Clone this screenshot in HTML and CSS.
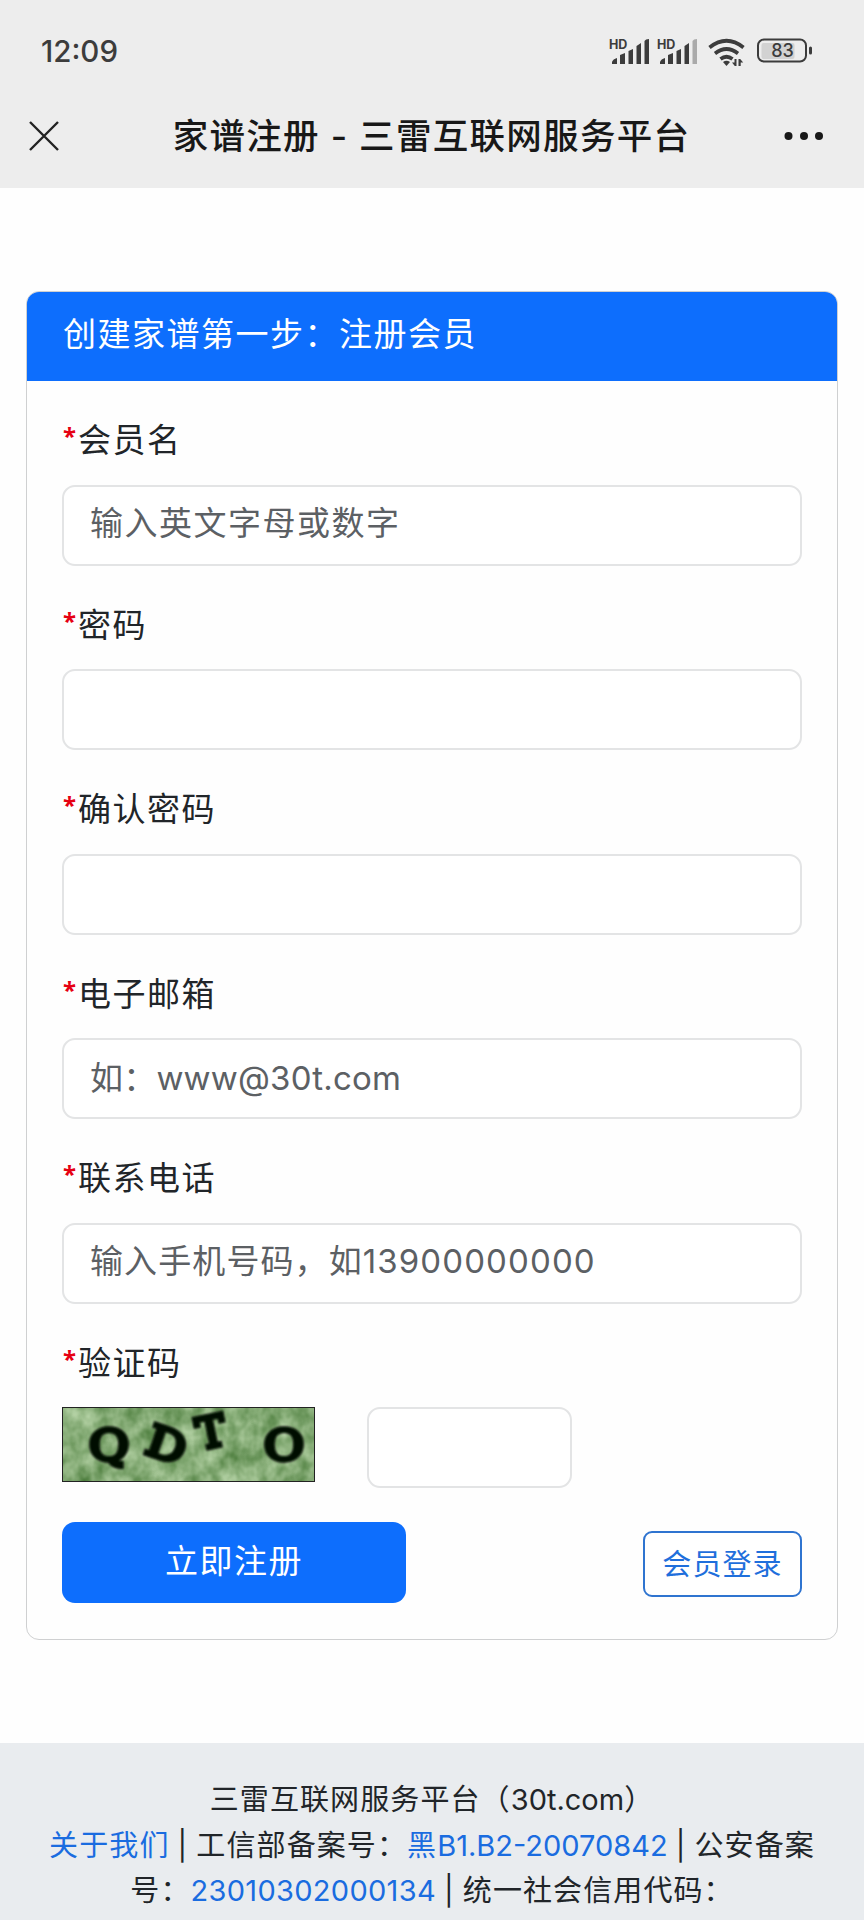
FILE: index.html
```html
<!DOCTYPE html>
<html lang="zh-CN">
<head>
  <meta charset="UTF-8" />
  <meta name="viewport" content="width=device-width, initial-scale=1.0"/>
  <title>家谱注册 - 三雷互联网服务平台</title>
  <link rel="stylesheet" href="styles.css">
</head>
<body>

  <header class="topbar">
    <div class="statusbar">
      <span class="time">12:09</span>
      <div class="status-icons">
        <svg class="signal" width="42" height="30" viewBox="0 0 42 30">
          <text x="-1" y="11" class="hd">HD</text>
          <path d="M2 26v-2q1-3 5-4v6zM10 26v-9l5-2v11zM18.500 26V13l4.500-2v15zM26.500 26V8l4.500-3v21zM34.500 26V3q1-2 4.500-2v25z"/>
        </svg>
        <svg class="signal" width="42" height="30" viewBox="0 0 42 30">
          <text x="-1" y="11" class="hd">HD</text>
          <path d="M2 26v-2q1-3 5-4v6zM10 26v-9l5-2v11zM18.500 26V13l4.500-2v15zM26.500 26V8l4.500-3v21z"/>
          <path class="dim" d="M34.500 26V3q1-2 4.500-2v25z"/>
        </svg>
        <svg class="wifi" width="38" height="30" viewBox="0 0 38 30">
          <path class="arc" d="M1.500 9.500Q18.500-4 35.500 9.500M7 15.500q11.500-9 23 0M12.500 21q6-4.500 12 0"/>
          <path d="M15 24q3.500-2.500 7 0l-3.500 4zM28.500 21v7h-1.700l-2.800-3.500h2.500V21zM30.500 28v-7h1.700l3 3.500h-2.500V28z"/>
        </svg>
        <svg class="battery" width="56" height="26" viewBox="0 0 56 26">
          <rect class="fill" x="4.500" y="5" width="33" height="16" rx="2"/>
          <rect class="shell" x="1" y="1.500" width="48" height="22" rx="6"/>
          <rect x="52" y="8.500" width="3" height="8" rx="1.500"/>
          <text x="25.500" y="19" class="level">83</text>
        </svg>
      </div>
    </div>
    <nav class="navbar">
      <svg class="close" width="30" height="30" viewBox="0 0 30 30">
        <path d="M1 1l28 28M29 1L1 29"/>
      </svg>
      <h1>家谱注册 - 三雷互联网服务平台</h1>
      <svg class="more" width="40" height="10" viewBox="0 0 40 10">
        <circle cx="4.500" cy="5" r="4"/><circle cx="20" cy="5" r="4"/><circle cx="35" cy="5" r="4"/>
      </svg>
    </nav>
  </header>

  <main class="container">
    <form class="card">
      <div class="card-header">创建家谱第一步：注册会员</div>
      <div class="card-body">
        <div class="form-group">
          <label for="username"><span class="required">*</span>会员名</label>
          <input type="text" id="username" placeholder="输入英文字母或数字" />
        </div>
        <div class="form-group">
          <label for="password"><span class="required">*</span>密码</label>
          <input type="password" id="password" />
        </div>
        <div class="form-group">
          <label for="password2"><span class="required">*</span>确认密码</label>
          <input type="password" id="password2" />
        </div>
        <div class="form-group">
          <label for="email"><span class="required">*</span>电子邮箱</label>
          <input type="text" id="email" class="email" placeholder="如：www@30t.com" />
        </div>
        <div class="form-group">
          <label for="phone"><span class="required">*</span>联系电话</label>
          <input type="text" id="phone" class="phone" placeholder="输入手机号码，如13900000000" />
        </div>
        <div class="form-group">
          <label for="code"><span class="required">*</span>验证码</label>
          <div class="code-row">
            <svg class="captcha" width="253" height="75" viewBox="0 0 253 75">
              <filter id="leaf" x="0" y="0" width="100%" height="100%" color-interpolation-filters="sRGB">
                <feTurbulence type="fractalNoise" baseFrequency="0.06 0.05" numOctaves="3" seed="8"/>
                <feColorMatrix values="0.55 0 0 0 0.25  0.45 0 0 0 0.45  0.55 0 0 0 0.19  0 0 0 0 1"/>
              </filter>
              <filter id="soft"><feGaussianBlur stdDeviation="0.8"/></filter>
              <rect width="253" height="75" filter="url(#leaf)"/>
              <g class="letters" filter="url(#soft)">
                <text x="47" y="53" textLength="40" lengthAdjust="spacingAndGlyphs">Q</text>
                <text x="105" y="53" textLength="39" lengthAdjust="spacingAndGlyphs" transform="rotate(19 105 37)">D</text>
                <text x="149" y="40" transform="rotate(-12 149 24)">T</text>
                <text x="222" y="53" textLength="40" lengthAdjust="spacingAndGlyphs">O</text>
              </g>
              <rect class="frame" x="0.500" y="0.500" width="252" height="74"/>
            </svg>
            <input type="text" id="code" class="code" />
          </div>
        </div>
        <div class="button-row">
          <button type="button" class="btn-primary">立即注册</button>
          <button type="button" class="btn-outline">会员登录</button>
        </div>
      </div>
    </form>
  </main>

  <footer class="footer">
    <p>三雷互联网服务平台（<span class="site">30t.com</span>）</p>
    <p><a href="#">关于我们</a> | 工信部备案号：<a href="#">黑<span class="record">B1.B2-20070842</span></a> | 公安备案</p>
    <p>号：<a href="#" class="num">23010302000134</a> | 统一社会信用代码：</p>
  </footer>

</body>
</html>
```
FILE: styles.css
```css
* {
  margin: 0;
  padding: 0;
  box-sizing: border-box;
}

body {
  font-family: Inter, "Noto Sans CJK SC", sans-serif;
  font-size: 33px;
  letter-spacing: 1.5px;
  color: #212529;
  background-color: #fefefe;
  height: 1920px;
  overflow: hidden;
}

.topbar {
  height: 188px;
  background-color: #ededed;
}

.statusbar {
  display: flex;
  justify-content: space-between;
  height: 85px;
  padding: 33px 51px 0 41px;
  color: #3c3c3c;
}

.time {
  font-size: 29.5px;
  line-height: 37px;
  font-weight: 500;
  letter-spacing: 0;
}

.status-icons {
  display: flex;
  align-items: flex-start;
  padding-top: 5px;
  fill: #3c3c3c;
}

.status-icons svg {
  overflow: visible;
}

.signal {
  margin-right: 6px;
}

.hd {
  font-size: 12.5px;
  font-weight: 700;
  letter-spacing: 0;
}

.dim {
  fill: #aaa;
}

.wifi {
  margin-left: 2px;
  margin-right: 11px;
}

.wifi .arc {
  fill: none;
  stroke: #3c3c3c;
  stroke-width: 3.7;
}

.battery .fill {
  fill: #d2d2d2;
}

.battery .shell {
  fill: none;
  stroke: #3c3c3c;
  stroke-width: 2;
}

.level {
  font-size: 18px;
  font-weight: 500;
  letter-spacing: 0;
  text-anchor: middle;
}

.navbar {
  display: flex;
  justify-content: space-between;
  align-items: center;
  height: 101px;
  padding: 0 40px 0 29px;
}

.close {
  stroke: #222;
  stroke-width: 2.4;
}

.navbar h1 {
  padding: 2px 0 0 20px;
  font-size: 35.5px;
  line-height: 50px;
  font-weight: 500;
  letter-spacing: 1.3px;
  color: #181818;
}

.more {
  fill: #181818;
}

.container {
  padding: 103px 26px 0;
}

.card {
  height: 1349px;
  border: 1px solid #cfd0d1;
  border-radius: 13px;
  overflow: hidden;
}

.card-header {
  height: 89px;
  padding: 17px 36px;
  line-height: 50px;
  color: #fff;
  background-color: #0d6efd;
}

.card-body {
  padding: 34px 35px 36px;
}

.form-group {
  height: 184.5px;
}

.form-group label {
  display: block;
  height: 69.5px;
  line-height: 50px;
}

.required {
  display: inline-block;
  width: 16px;
  padding-left: 1px;
  font-family: "Noto Sans", sans-serif;
  font-size: 24px;
  line-height: 30px;
  font-weight: 700;
  letter-spacing: 0;
  vertical-align: 7px;
  color: #e60012;
}

.form-group input {
  display: block;
  width: 740px;
  height: 81px;
  padding: 0 26px 4px;
  border: 2px solid #e3e4e5;
  border-radius: 13px;
  font-family: inherit;
  font-size: 33px;
  letter-spacing: 1.5px;
  background-color: #fff;
}

.form-group input::placeholder {
  color: #5c6064;
}

.form-group .email {
  padding-bottom: 2px;
  letter-spacing: 0.2px;
}

.form-group .phone {
  letter-spacing: 1.1px;
}

.code-row {
  display: flex;
  align-items: flex-start;
  gap: 52px;
}

.form-group .code {
  width: 205px;
}

.captcha {
  overflow: visible;
}

.captcha .letters {
  font-family: "DejaVu Serif", serif;
  font-size: 43px;
  letter-spacing: 0;
  text-anchor: middle;
  fill: #050705;
  stroke: #050705;
  stroke-width: 4.5;
}

.captcha .frame {
  fill: none;
  stroke: #222;
}

.button-row {
  display: flex;
  justify-content: space-between;
  align-items: flex-start;
}

.button-row button {
  font-family: inherit;
  cursor: pointer;
}

.btn-primary {
  width: 344px;
  height: 81px;
  padding-bottom: 7px;
  border: none;
  border-radius: 13px;
  background-color: #0d6efd;
  color: #fff;
  font-size: 33px;
  letter-spacing: 1.5px;
}

.btn-outline {
  width: 159px;
  height: 66px;
  margin-top: 9px;
  padding-bottom: 5px;
  border: 2px solid #2f74d0;
  border-radius: 9px;
  background-color: #fff;
  color: #1f6fdc;
  font-size: 29px;
  letter-spacing: 1.1px;
}

.footer {
  height: 177px;
  margin-top: 103px;
  padding-top: 34px;
  background-color: #e9ecef;
  text-align: center;
  font-size: 29px;
  line-height: 45.7px;
  letter-spacing: 1.1px;
  word-spacing: -1.2px;
}

.footer p {
  height: 45.7px;
  white-space: nowrap;
}

.footer a {
  color: #1a6ce0;
  text-decoration: none;
}

.footer .site,
.footer .record {
  letter-spacing: 0;
}

.footer .num {
  letter-spacing: 0.3px;
}
```
